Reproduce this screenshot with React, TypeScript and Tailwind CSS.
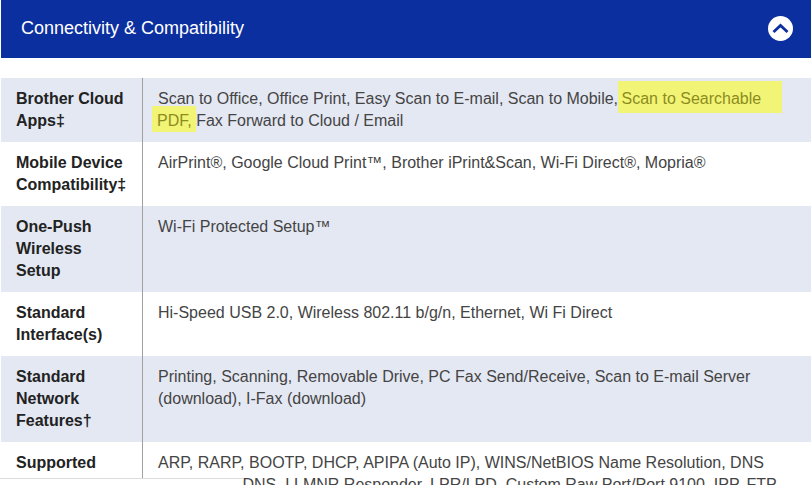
import React from "react";

function Row({ shade, h, label, children }: { shade?: boolean; h: string; label: React.ReactNode; children: React.ReactNode }) {
  return (
    <div className={`flex ${h} ${shade ? "bg-[#e4e8f3]" : "bg-white"}`}>
      <div className="w-[141px] shrink-0 pl-[15px] pr-[14px] pt-[10px] font-bold text-[#222] leading-[22px]">{label}</div>
      <div className="flex-1 border-l border-[#a0a0a0] pl-[15px] pr-[20px] pt-[10px] text-[#444] leading-[22px]">{children}</div>
    </div>
  );
}

export default function App() {
  return (
    <div className="w-[811px] h-[485px] overflow-hidden bg-white relative text-[16px] font-['Liberation_Sans',Arial,sans-serif]">
      <div className="ml-px h-[58px] bg-[#0c2fa0] flex items-center justify-between pl-5 pr-[18px] pb-[2px]">
        <span className="text-white text-[18px]">Connectivity &amp; Compatibility</span>
        <span className="w-[25px] h-[25px] rounded-full bg-white flex items-center justify-center">
          <svg width="17" height="11" viewBox="0 0 17 11" fill="none" stroke="#0c2fa0" strokeWidth="2.8"><path d="M1.5 9 8.5 2.5l7 6.5" /></svg>
        </span>
      </div>
      <div className="ml-px mt-5">
        <Row shade h="h-[64px]" label={<>Brother Cloud Apps‡</>}>
          Scan to Office, Office Print, Easy Scan to E-mail, Scan to Mobile,{" "}
          <span className="bg-[#f2f476] text-[#8c8c1e] -ml-[5px] pl-[4px] -mr-[21px] pr-[21px] pt-[9px] pb-[6px]">Scan to Searchable</span>{" "}
          <span className="bg-[#f2f476] text-[#8c8c1e] -ml-[6px] pl-[5px] -mr-[4px] pr-[4px] pt-[6px] pb-[3px]">PDF,</span>{" "}
          Fax Forward to Cloud / Email
        </Row>
        <Row h="h-[64px]" label={<>Mobile Device Compatibility‡</>}>
          AirPrint®, Google Cloud Print™, Brother iPrint&amp;Scan, Wi-Fi Direct®, Mopria®
        </Row>
        <Row shade h="h-[86px]" label={<>One-Push Wireless Setup</>}>Wi-Fi Protected Setup™</Row>
        <Row h="h-[64px]" label={<>Standard Interface(s)</>}>Hi-Speed USB 2.0, Wireless 802.11 b/g/n, Ethernet, Wi Fi Direct</Row>
        <Row shade h="h-[86px]" label={<>Standard Network Features†</>}>
          Printing, Scanning, Removable Drive, PC Fax Send/Receive, Scan to E-mail Server (download), I-Fax (download)
        </Row>
        <Row h="h-[86px]" label={<>Supported Network Protocols</>}>
          ARP, RARP, BOOTP, DHCP, APIPA (Auto IP), WINS/NetBIOS Name Resolution, DNS Resolver, mDNS, LLMNR Responder, LPR/LPD, Custom Raw Port/Port 9100, IPP, FTP
        </Row>
      </div>
      <div className="absolute left-0 top-[478px] w-[243px] h-[7px] bg-white border-t border-[#dcdcdc]" />
    </div>
  );
}
